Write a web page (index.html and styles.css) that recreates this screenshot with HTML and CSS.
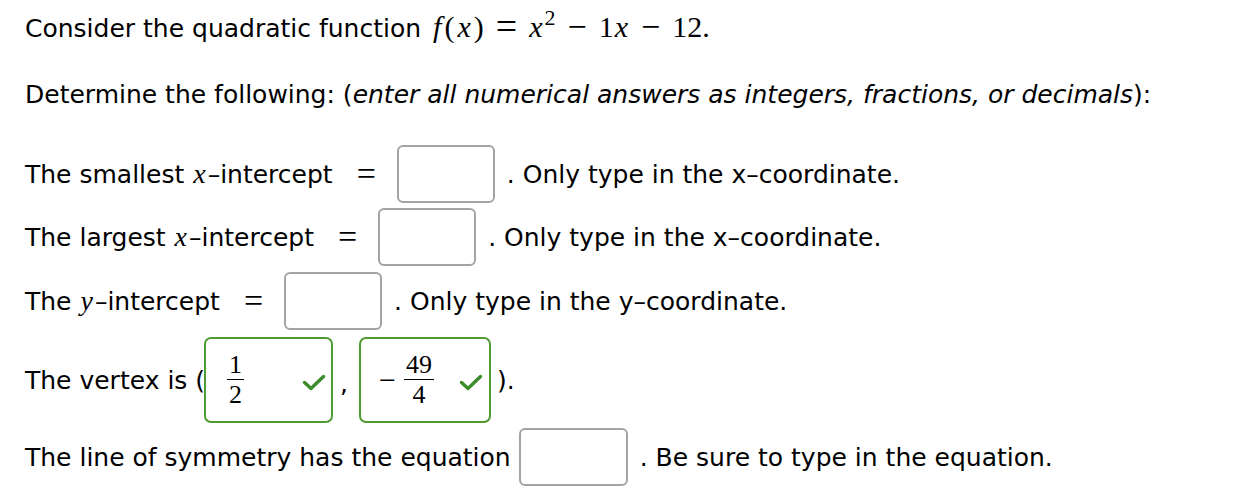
FILE: index.html
```html
<!DOCTYPE html>
<html>
<head>
<meta charset="utf-8">
<link rel="stylesheet" href="styles.css">
</head>
<body>
<div class="page">
  <p class="line intro">Consider the quadratic function <span class="math"><span class="fx"><i>f</i>(<i>x</i>)</span><span class="rel">=</span><span class="sq"><i>x</i><sup>2</sup></span><span class="bin">−</span><span class="term t1">1<i>x</i></span><span class="bin">−</span><span class="term t2">12.</span></span></p>
  <p class="line instr">Determine the following: (<em>enter all numerical answers as integers, fractions, or decimals</em>):</p>

  <div class="row r1">
    <span class="label">The smallest <i class="mv">x</i>–intercept</span>
    <span class="eq">=</span>
    <span class="box"></span>
    <span class="after">. Only type in the x–coordinate.</span>
  </div>
  <div class="row r2">
    <span class="label">The largest <i class="mv">x</i>–intercept</span>
    <span class="eq">=</span>
    <span class="box"></span>
    <span class="after">. Only type in the x–coordinate.</span>
  </div>
  <div class="row r3">
    <span class="label">The <i class="mv">y</i>–intercept</span>
    <span class="eq">=</span>
    <span class="box"></span>
    <span class="after">. Only type in the y–coordinate.</span>
  </div>
  <div class="row r4">
    <span class="label">The vertex is (</span>
    <span class="gbox g1">
      <span class="frac"><span class="num">1</span><span class="den">2</span></span>
      <svg class="check" viewBox="0 0 24 17" width="24" height="17"><path d="M2.5 8.5 L9 14.5 L21.5 2.5" fill="none" stroke="#3d8b2a" stroke-width="3.4" stroke-linecap="round" stroke-linejoin="round"/></svg>
    </span>
    <span class="comma">,</span>
    <span class="gbox g2">
      <span class="minus">−</span>
      <span class="frac"><span class="num">49</span><span class="den">4</span></span>
      <svg class="check" viewBox="0 0 24 17" width="24" height="17"><path d="M2.5 8.5 L9 14.5 L21.5 2.5" fill="none" stroke="#3d8b2a" stroke-width="3.4" stroke-linecap="round" stroke-linejoin="round"/></svg>
    </span>
    <span class="close">).</span>
  </div>
  <div class="row r5">
    <span class="label">The line of symmetry has the equation</span>
    <span class="box wide"></span>
    <span class="after">. Be sure to type in the equation.</span>
  </div>
</div>
</body>
</html>
```

FILE: styles.css
```css
html, body {
  margin: 0;
  padding: 0;
  background: #fff;
}
body {
  font-family: "DejaVu Sans", "Lucida Grande", sans-serif;
  font-size: 25px;
  color: #000;
}
.page {
  padding: 10px 0 0 25px;
}
.line {
  margin: 0;
  height: 34px;
  line-height: 34px;
  white-space: nowrap;
}
.instr {
  margin-top: 34px;
}
.math {
  font-family: "Liberation Serif", "DejaVu Serif", serif;
  font-size: 30px;
  margin-left: 4px;
}
.math i {
  font-style: italic;
}
.math .fx {
  letter-spacing: 3px;
}
.math .rel {
  font-size: 38px;
  line-height: 0;
  padding: 0 12px 0 9px;
  vertical-align: -2px;
}
.math .bin {
  font-size: 34px;
  line-height: 0;
  padding: 0 12px;
  vertical-align: -1px;
}
.math .sq i {
  letter-spacing: 1px;
}
.math .t1 {
  letter-spacing: 1px;
}
.math .t2 {
  letter-spacing: 0;
}
.math sup {
  font-size: 22px;
  line-height: 0;
  vertical-align: 12px;
  margin-left: 1px;
}
.mv {
  font-family: "Liberation Serif", serif;
  font-size: 28px;
  font-style: italic;
  padding-left: 1px;
  padding-right: 2px;
}
.row {
  display: flex;
  align-items: center;
  white-space: nowrap;
}
.r1 { margin-top: 33px; }
.r2 { margin-top: 5px; }
.r3 { margin-top: 6px; }
.r4 { margin-top: 7px; }
.r5 { margin-top: 5px; }
.eq {
  font-family: "Liberation Serif", serif;
  font-size: 34px;
  line-height: 30px;
  margin: 0 21px 0 24px;
}
.box {
  width: 94px;
  height: 54px;
  border: 2px solid #a3a3a3;
  border-radius: 6px;
}
.box.wide {
  width: 105px;
  margin-left: 8px;
}
.after {
  margin-left: 12px;
}
.gbox {
  display: flex;
  align-items: center;
  height: 82px;
  border: 2px solid #4e9a33;
  border-radius: 7px;
}
.g1 {
  width: 125px;
  margin-left: -1px;
}
.g2 {
  width: 128px;
}
.frac {
  display: inline-flex;
  flex-direction: column;
  align-items: center;
  font-family: "Liberation Serif", serif;
  font-size: 26px;
  line-height: 24px;
}
.frac .num {
  border-bottom: 1.5px solid #000;
  padding: 0 2px 2px;
}
.frac .den {
  padding-top: 3px;
}
.g1 .frac {
  margin-left: 21px;
}
.g1 .check {
  margin-left: 58px;
}
.minus {
  font-family: "Liberation Serif", serif;
  font-size: 30px;
  margin-left: 18px;
  margin-right: 8px;
}
.g2 .check {
  margin-left: 25px;
}
.check {
  margin-top: 4px;
}
.comma {
  margin: 6px 11px 0 7px;
}
.close {
  margin-left: 6px;
}
```
